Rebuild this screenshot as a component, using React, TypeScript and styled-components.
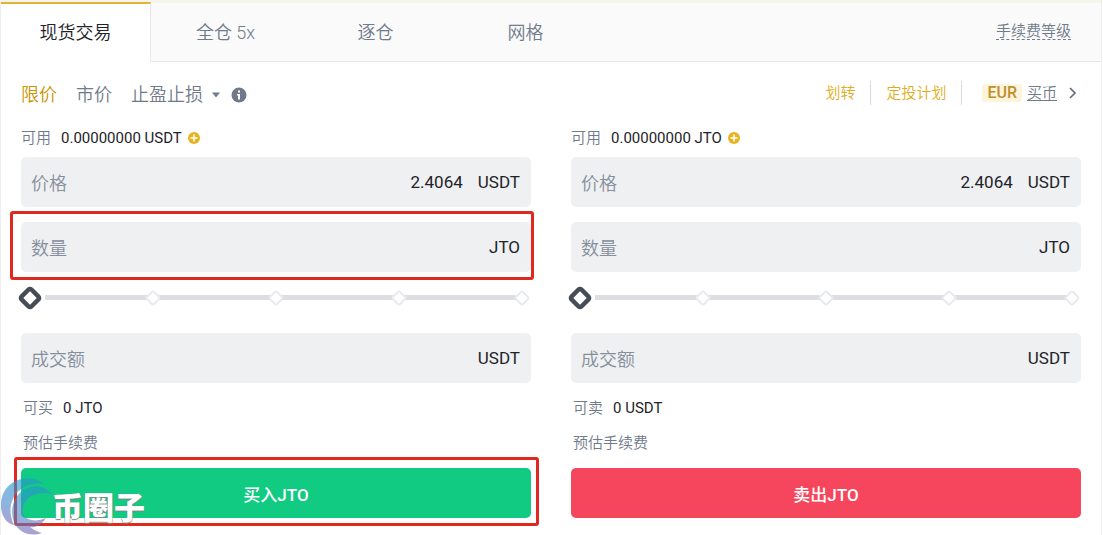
import React from 'react';
import styled, { createGlobalStyle } from 'styled-components';

const cjk = `'Noto Sans CJK SC'`;
const latinFont = `Roboto, ${cjk}, sans-serif`;

const GlobalStyle = createGlobalStyle`
  *, *::before, *::after { box-sizing: border-box; }
  body { margin: 0; background: #fff; color: #1e2329; font-family: ${latinFont}; font-size: 15px; }
  button, input { font: inherit; color: inherit; border: 0; background: none; padding: 0; margin: 0; }
  button { cursor: pointer; }
  a { color: inherit; text-decoration: none; }
`;

const Panel = styled.main`
  margin-right: 1px;
  min-height: 100vh;
  border: 0 solid #eeeef0;
  border-width: 0 1px;
  overflow: hidden;
`;

const TopBar = styled.nav`
  display: flex;
  height: 62px;
  padding-top: 2px;
  background: #fafafa;
  border-bottom: 1px solid #e6e8ea;
  box-shadow: inset 0 3px #f5f5ea;
`;

const Tab = styled.button<{ $active?: boolean }>`
  width: 150px;
  height: ${p => (p.$active ? 60 : 59)}px;
  font-size: 18px;
  font-weight: 350;
  line-height: 24px;
  color: ${p => (p.$active ? '#1e2329' : '#707a8a')};
  background: ${p => (p.$active ? '#fff' : 'transparent')};
  border-top: 2px solid ${p => (p.$active ? '#e2b334' : 'transparent')};
  border-right: 1px solid ${p => (p.$active ? '#e6e8ea' : 'transparent')};
`;

const FeeLink = styled.a`
  align-self: center;
  margin-left: auto;
  margin-right: 30px;
  line-height: 16px;
  font-weight: 350;
  color: #707a8a;
  border-bottom: 1px dashed #707a8a;
`;

const Toolbar = styled.div`
  display: flex;
  justify-content: space-between;
  align-items: center;
  height: 66px;
  padding: 0 20px;
`;

const OrderTypes = styled.div`
  display: flex;
  align-items: center;
  gap: 19px;
`;

const StopOrder = styled.div`
  display: flex;
  align-items: center;
  gap: 10px;
`;

const OrderType = styled.button<{ $active?: boolean }>`
  display: flex;
  align-items: center;
  gap: 8px;
  font-size: 18px;
  line-height: 24px;
  font-weight: 350;
  color: ${p => (p.$active ? '#c99400' : '#707a8a')};
`;

const Quick = styled.div`
  display: flex;
  align-items: center;
  padding-bottom: 4px;
`;

const QuickLink = styled.a`
  padding-right: 15px;
  margin-right: 15px;
  line-height: 24px;
  font-weight: 350;
  color: #dfae1c;
  border-right: 1px solid #d8dade;
`;

const BuyCoin = styled.a`
  display: flex;
  align-items: center;
  gap: 5px;
  padding-left: 5px;
  line-height: 18px;
  font-weight: 350;
  color: #707a8a;
  u { text-underline-offset: 2px; }
`;

const Currency = styled.span`
  padding: 0 5px;
  font-size: 16px;
  font-weight: 500;
  color: #c08f2c;
  background: #fdf4dc;
  border-radius: 3px;
`;

const Columns = styled.div`
  display: grid;
  grid-template-columns: 1fr 1fr;
  gap: 40px;
  padding: 0 20px;
`;

const Form = styled.form`
  display: flex;
  flex-direction: column;
  min-width: 0;
`;

const Info = styled.div`
  display: flex;
  align-items: center;
  gap: 10px;
  height: 20px;
  line-height: 20px;
`;

const Balance = styled(Info)`
  margin-bottom: 9px;
`;

const Summary = styled.div`
  display: flex;
  flex-direction: column;
  gap: 15px;
  margin-bottom: 15px;
  padding-left: 2px;
`;

const Muted = styled.span`
  font-weight: 350;
  color: #707a8a;
`;

const AddButton = styled.button`
  display: flex;
  margin-left: -4px;
`;

const Field = styled.label`
  position: relative;
  display: flex;
  align-items: center;
  height: 50px;
  padding: 0 11px 0 10px;
  margin-bottom: 15px;
  font-size: 17px;
  background: #eff0f2;
  border-radius: 5px;
`;

const FieldName = styled.span`
  font-size: 18px;
  font-weight: 350;
  color: #848e9c;
`;

const FieldInput = styled.input`
  flex: 1;
  min-width: 0;
  margin-right: 15px;
  text-align: right;
  outline: none;
`;

const SliderRow = styled.div`
  display: flex;
  height: 26px;
  margin: -2px -3px 22px;
  position: relative;
  svg { width: 100%; height: 26px; overflow: visible; }
  input { position: absolute; inset: 0; width: 100%; opacity: 0; cursor: pointer; }
`;

const SubmitWrap = styled.div`
  position: relative;
  display: flex;
`;

const Submit = styled.button<{ $side: Side }>`
  flex: 1;
  height: 50px;
  font-size: 17px;
  font-weight: 500;
  color: #fff;
  background: ${p => (p.$side === 'buy' ? '#11cb83' : '#f6465d')};
  border-radius: 5px;
`;

const Highlight = styled.span<{ $left: number; $right: number }>`
  position: absolute;
  inset: -11px -${p => p.$right}px -8px -${p => p.$left}px;
  border: 3px solid #e0281f;
  border-radius: 3px;
  pointer-events: none;
`;

const Watermark = styled.div`
  position: absolute;
  left: -21px;
  top: 8px;
  display: flex;
  pointer-events: none;
  svg { flex: none; }
`;

const WatermarkText = styled.span`
  margin-top: 14px;
  font: 900 31px/32px ${cjk}, sans-serif;
  color: #fff;
  text-shadow: 0 0 1px #777, 0 1px 1px #888;
`;

type Side = 'buy' | 'sell';

const PlusIcon = () => (
  <svg width="12" height="12" viewBox="0 0 12 12" aria-hidden="true">
    <circle cx="6" cy="6" r="6" fill="#e6b422" />
    <path d="M6 2.5v7M2.5 6h7" stroke="#fff" strokeWidth="1.5" />
  </svg>
);

const Slider = ({ label }: { label: string }) => (
  <SliderRow>
    <svg aria-hidden="true">
      <line x1="27" x2="98%" y1="12.5" y2="12.5" stroke="#dcdee2" strokeWidth="5" />
      {[25, 50, 75, 100].map(n => (
        <svg key={n} x={`${n}%`} y="13" overflow="visible">
          <g transform={`translate(${12 - (n * 24) / 100})`}>
            <rect x="-5" y="-5" width="10" height="10" rx="1.5" transform="rotate(45)" fill="#fff" stroke="#e9eaed" strokeWidth="2" />
          </g>
        </svg>
      ))}
      <rect x="-7" y="-7" width="14" height="14" rx="2" transform="translate(12 13) rotate(45)" fill="#fff" stroke="#474d57" strokeWidth="4.5" />
    </svg>
    <input type="range" min="0" max="100" step="25" defaultValue="0" aria-label={label} />
  </SliderRow>
);

const WatermarkLogo = () => (
  <svg width="52" height="59" viewBox="0 0 52 59" aria-hidden="true">
    <defs>
      <linearGradient id="wave" x1="0.3" y1="0" x2="0.5" y2="1">
        <stop offset="0" stopColor="#1d9ad2" />
        <stop offset="0.5" stopColor="#4d86c8" />
        <stop offset="1" stopColor="#7a68b4" />
      </linearGradient>
    </defs>
    <g fill="url(#wave)" opacity="0.62">
      <path d="M44 8C36 1 22 0 12 7C2 14-1 27 2 37C4 43 8 48 14 49C9 38 9 27 16 18C23 9 34 6 44 8Z" />
      <path d="M52 18C45 9 31 8 22 15C12 23 10 36 14 46C19 57 30 61 42 57C33 55 25 48 23 39C20 26 32 13 52 18Z" />
      <path d="M21 36C25 44 35 47 46 42C41 50 33 54 25 49C21 46 20 41 21 36Z" />
    </g>
  </svg>
);

interface SideProps {
  side: Side;
  available: string;
  maxLabel: string;
  max: string;
  action: string;
}

const OrderForm = ({ side, available, maxLabel, max, action }: SideProps) => (
  <Form onSubmit={e => e.preventDefault()}>
    <Balance>
      <Muted>可用</Muted>
      <span>{available}</span>
      <AddButton type="button" aria-label="充值"><PlusIcon /></AddButton>
    </Balance>
    <Field>
      <FieldName>价格</FieldName>
      <FieldInput defaultValue="2.4064" />
      <span>USDT</span>
    </Field>
    <Field>
      <FieldName>数量</FieldName>
      <FieldInput />
      <span>JTO</span>
      {side === 'buy' && <Highlight $left={11} $right={3} />}
    </Field>
    <Slider label={action} />
    <Field>
      <FieldName>成交额</FieldName>
      <FieldInput />
      <span>USDT</span>
    </Field>
    <Summary>
      <Info>
        <Muted>{maxLabel}</Muted>
        <span>{max}</span>
      </Info>
      <Info>
        <Muted>预估手续费</Muted>
      </Info>
    </Summary>
    <SubmitWrap>
      <Submit type="submit" $side={side}>{action}</Submit>
      {side === 'buy' && (
        <>
          <Highlight $left={7} $right={8} />
          <Watermark>
            <WatermarkLogo />
            <WatermarkText>币圈子</WatermarkText>
          </Watermark>
        </>
      )}
    </SubmitWrap>
  </Form>
);

export default function App() {
  return (
    <>
      <GlobalStyle />
      <Panel>
        <TopBar>
          <Tab $active>现货交易</Tab>
          <Tab>全仓 5x</Tab>
          <Tab>逐仓</Tab>
          <Tab>网格</Tab>
          <FeeLink href="#">手续费等级</FeeLink>
        </TopBar>
        <Toolbar>
          <OrderTypes>
            <OrderType $active>限价</OrderType>
            <OrderType>市价</OrderType>
            <StopOrder>
              <OrderType>
                止盈止损
                <svg width="10" height="6" viewBox="0 0 10 6" aria-hidden="true"><path d="M1 0.5h8L5 5.5z" fill="#707a8a" /></svg>
              </OrderType>
              <svg width="16" height="16" viewBox="0 0 16 16" aria-hidden="true">
                <circle cx="8" cy="8" r="7.5" fill="#707a8a" />
                <path d="M7 3.5h2v2H7zM6 7h3v5.5H7V8.500H6z" fill="#fff" />
              </svg>
            </StopOrder>
          </OrderTypes>
          <Quick>
            <QuickLink href="#">划转</QuickLink>
            <QuickLink href="#">定投计划</QuickLink>
            <BuyCoin href="#">
              <Currency>EUR</Currency>
              <u>买币</u>
              <svg width="19" height="12" viewBox="0 0 19 12" fill="none" stroke="#5f6876" strokeWidth="1.6" aria-hidden="true"><path d="M8 1l5 5-5 5" /></svg>
            </BuyCoin>
          </Quick>
        </Toolbar>
        <Columns>
          <OrderForm side="buy" available="0.00000000 USDT" maxLabel="可买" max="0 JTO" action="买入JTO" />
          <OrderForm side="sell" available="0.00000000 JTO" maxLabel="可卖" max="0 USDT" action="卖出JTO" />
        </Columns>
      </Panel>
    </>
  );
}
